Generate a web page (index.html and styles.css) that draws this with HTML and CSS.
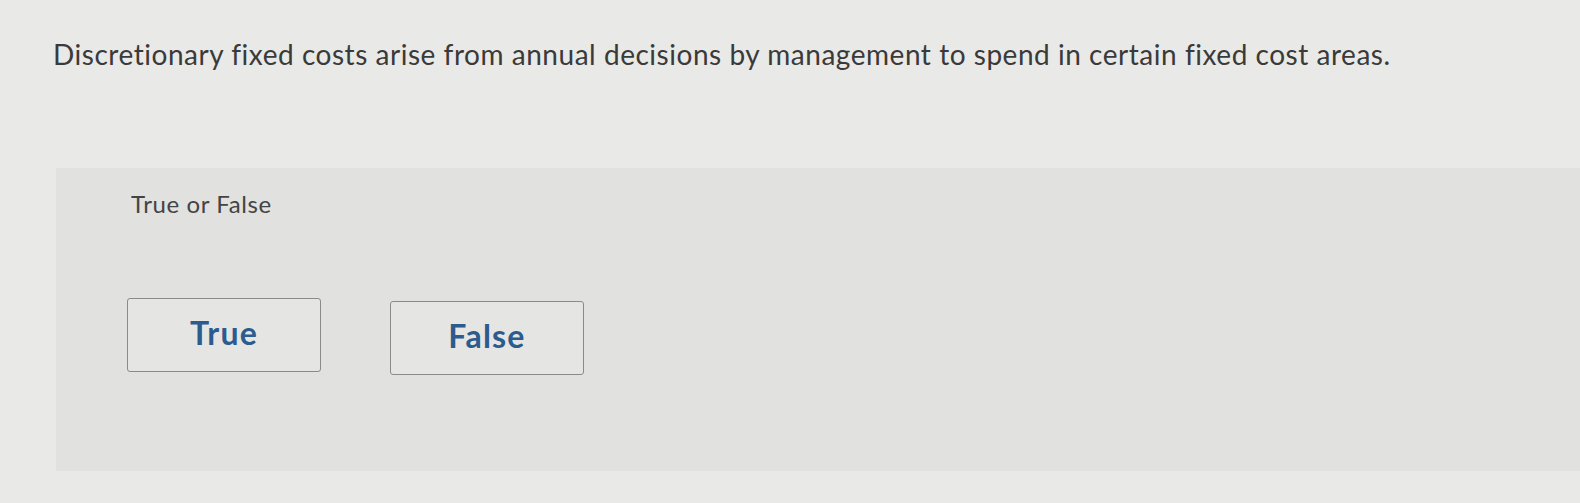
FILE: index.html
```html
<!DOCTYPE html>
<html>
<head>
<meta charset="utf-8">
<link rel="stylesheet" href="styles.css">
</head>
<body>
<div class="page">
  <p class="question">Discretionary fixed costs arise from annual decisions by management to spend in certain fixed cost areas.</p>
  <div class="panel">
    <p class="prompt">True or False</p>
    <div class="choices">
      <button class="choice">True</button>
      <button class="choice">False</button>
    </div>
  </div>
</div>
</body>
</html>
```

FILE: styles.css
```css
html, body {
  margin: 0;
  padding: 0;
  background: #e9e9e7;
  width: 1580px;
  height: 503px;
  overflow: hidden;
}
.page {
  font-family: Lato, "Open Sans", sans-serif;
  padding: 37px 0 0 53px;
}
.question {
  margin: 0;
  font-size: 28px;
  line-height: 34px;
  color: #3a3a3a;
  letter-spacing: 0.53px;
  white-space: nowrap;
}
.panel {
  margin-top: 97px;
  margin-left: 3px;
  height: 303px;
  background: #e1e1df;
  padding: 21px 0 0 71px;
  box-sizing: border-box;
}
.prompt {
  margin: 0;
  padding-left: 4px;
  font-size: 24px;
  line-height: 30px;
  color: #444;
  letter-spacing: 0.6px;
}
.choices {
  display: flex;
  align-items: flex-start;
  gap: 69px;
  margin-top: 79px;
}
.choice {
  width: 194px;
  height: 74px;
  background: #e5e5e3;
  border: 1.5px solid #8a8a8a;
  border-radius: 3px;
  font-family: Lato, "Open Sans", sans-serif;
  font-weight: 700;
  font-size: 32px;
  letter-spacing: 1.2px;
  color: #2c5b8e;
  padding: 0 0 5px;
}
.choice + .choice {
  margin-top: 3px;
}
```
